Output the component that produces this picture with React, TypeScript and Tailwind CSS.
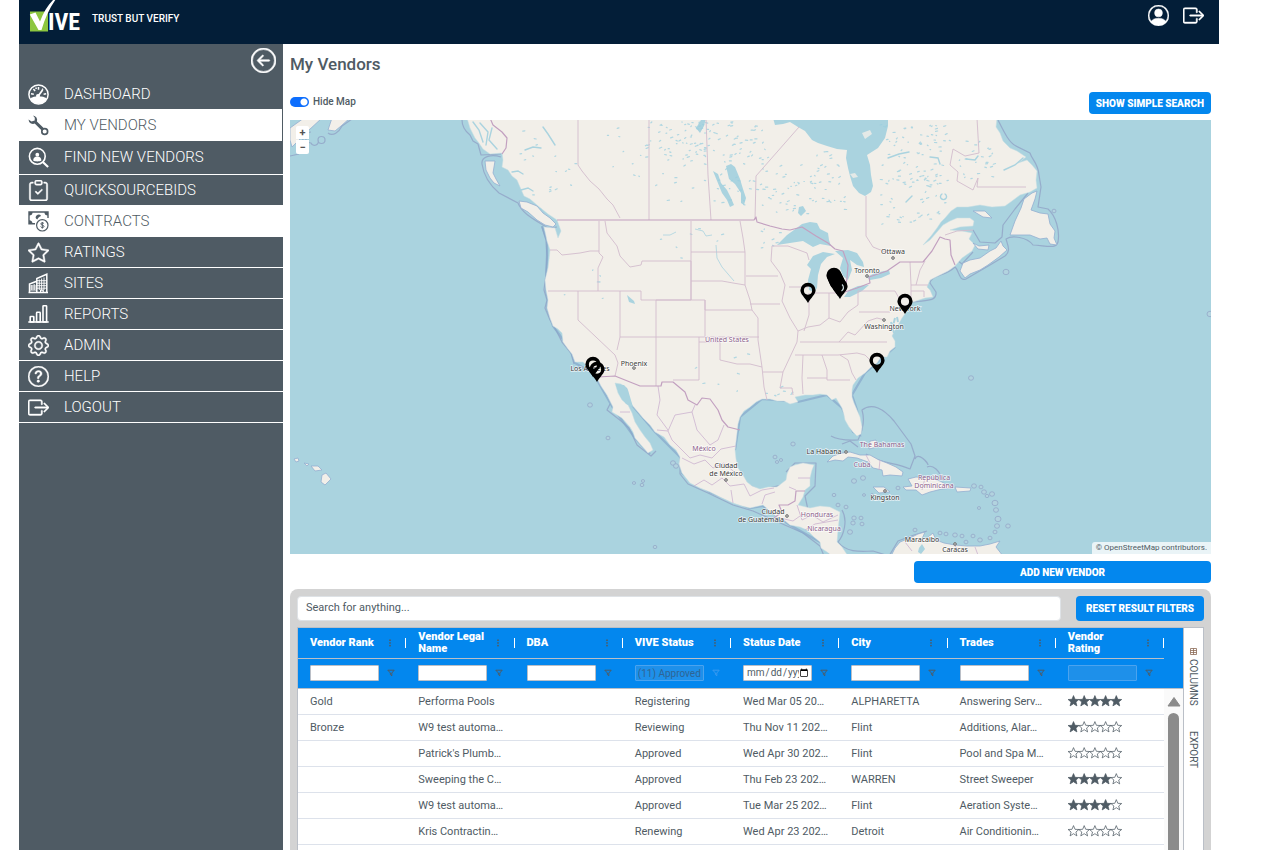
import React from "react";
import {
  BsArrowLeftCircle,
  BsBoxArrowRight,
  BsClipboardCheck,
  BsGear,
  BsPersonCircle,
  BsQuestionCircle,
  BsStar,
} from "react-icons/bs";

const LAND = "#f2efe9";
const WATER = "#aad3df";

/* ---------- sidebar icons ---------- */

function GaugeIcon() {
  return (
    <svg viewBox="0 0 21 21" className="size-[21px]" fill="none" stroke="currentColor" aria-hidden="true">
      <circle cx="10.5" cy="10.5" r="9.6" strokeWidth="1.5" />
      <path d="M2.2 14.2c2.4-1.4 4.800-1.800 8.300-1.800s5.900.4 8.300 1.800a9 9 0 0 1-16.600 0z" fill="currentColor" stroke="none" />
      <path d="M10 12.200 14.600 6" strokeWidth="1.800" />
      <circle cx="10" cy="12" r="2" fill="currentColor" stroke="none" />
      <path d="M10.500 3v2.800M5.400 5l1.700 2M3 9.800l2.800.4M15.600 10.200l2.600-.4M15 4.800l-.8.9M7.800 3.600l.5 1.400" strokeWidth="1.500" />
    </svg>
  );
}

function WrenchIcon() {
  return (
    <svg viewBox="0 0 21 21" className="size-[21px]" fill="none" stroke="currentColor" aria-hidden="true">
      <path d="M5 .4a4.600 4.600 0 0 1 3.900 6.100l7 6.800-2.200 2.200-7-6.900A4.600 4.600 0 0 1 .5 4.500l3 2.100L6.700 5.500 6.800 2.700z" fill="currentColor" stroke="none" />
      <circle cx="16.700" cy="16.500" r="2.900" strokeWidth="1.700" />
    </svg>
  );
}

function FindPersonIcon() {
  return (
    <svg viewBox="0 0 21 21" className="size-[21px]" fill="none" stroke="currentColor" aria-hidden="true">
      <circle cx="9.300" cy="9.300" r="7.900" strokeWidth="1.600" />
      <circle cx="9.300" cy="7.700" r="1.900" fill="currentColor" stroke="none" />
      <path d="M5.200 13.600c0-2.800 1.700-4 4.100-4s4.100 1.200 4.100 4c-2 1.200-6.200 1.200-8.200 0z" fill="currentColor" stroke="none" />
      <path d="m14.800 15 5.300 5" strokeWidth="2.200" />
    </svg>
  );
}

function ContractIcon() {
  return (
    <svg viewBox="0 0 21 21" className="size-[21px]" fill="none" stroke="currentColor" aria-hidden="true">
      <path d="M7 12.700H1V1h19v6" strokeWidth="1.400" />
      <path d="M1 1h3.600A3.600 3.600 0 0 1 1 4.600zM20 1h-3.600A3.600 3.600 0 0 0 20 4.600zM1 12.700V9.200a3.500 3.500 0 0 1 3.500 3.500z" fill="currentColor" stroke="none" />
      <path d="M7.600 6.800a3 3 0 0 1 5.500-1.900c-1.600.6-2.900 1.600-3.800 3.600a3 3 0 0 1-1.700-1.700z" fill="currentColor" stroke="none" />
      <circle cx="14.300" cy="14.300" r="5.700" strokeWidth="1.200" />
      <path d="M16 12.700c-.5-1.200-3.200-1.200-3.200.2s3.200 1 3.200 2.500-2.800 1.500-3.400.2M14.300 11v6.600" strokeWidth="1" />
    </svg>
  );
}

function BuildingsIcon() {
  return (
    <svg viewBox="0 0 21 21" className="size-[21px]" fill="none" stroke="currentColor" aria-hidden="true">
      <path d="M.5 19.600h19.500M1.500 19.500V11L8.800 8.200v11.300M8.800 8 8.800 5.500 18.800 1.200v18.300" strokeWidth="1.500" />
      <path d="M3.800 12v5M6.200 11v6M11.300 6.500V17M13.600 5.500V17M16 4.500V17M2 13h6.500M2 15h6.500M2 17h6.500M9 7.700h9.500M9 10.200h9.500M9 12.700h9.500M9 15.200h9.500" strokeWidth=".9" />
      <path d="M12.600 19.500v-2.400h2.600v2.400" strokeWidth="1.200" />
    </svg>
  );
}

function BarsIcon() {
  return (
    <svg viewBox="0 0 21 21" className="size-[21px]" fill="none" stroke="currentColor" strokeWidth="1.600" aria-hidden="true">
      <path d="M.3 18h20.400" />
      <rect x="2.200" y="12.500" width="3.600" height="5.500" rx=".6" />
      <rect x="8.600" y="8.300" width="3.600" height="9.700" rx=".6" />
      <rect x="15" y="1.700" width="3.600" height="16.300" rx=".6" />
    </svg>
  );
}

type NavItem = { label: string; icon: React.ReactNode; row: string };

const DARK_ROW = "h-[31px] border-b border-white text-white";
const NAV_ICON = "size-[21px] stroke-current stroke-[0.35px]";
const NAV: NavItem[] = [
  { label: "DASHBOARD", icon: <GaugeIcon />, row: "h-[30px] text-white" },
  { label: "MY VENDORS", icon: <WrenchIcon />, row: "h-8 border-r border-[#4f5b64] bg-white text-[#4f5b64]" },
  { label: "FIND NEW VENDORS", icon: <FindPersonIcon />, row: "h-[34px] border-b border-white text-white" },
  { label: "QUICKSOURCEBIDS", icon: <BsClipboardCheck className={NAV_ICON} />, row: "h-[30px] text-white" },
  { label: "CONTRACTS", icon: <ContractIcon />, row: "h-8 bg-white text-[#4f5b64]" },
  { label: "RATINGS", icon: <BsStar className={NAV_ICON} />, row: DARK_ROW },
  { label: "SITES", icon: <BuildingsIcon />, row: DARK_ROW },
  { label: "REPORTS", icon: <BarsIcon />, row: DARK_ROW },
  { label: "ADMIN", icon: <BsGear className={NAV_ICON} />, row: DARK_ROW },
  { label: "HELP", icon: <BsQuestionCircle className={NAV_ICON} />, row: DARK_ROW },
  { label: "LOGOUT", icon: <BsBoxArrowRight className={NAV_ICON} />, row: DARK_ROW },
];

/* ---------- map ---------- */

const MAINLAND =
  "M467 118 470 128 475 138 479 143 483 149 490 154 502 153 503 160 502 167 508 170 512 176 517 180 520 187 524 196 530 199 537 205 548 214 557 220 561 231 558 238 555 228 544 227 546 236 547 241 550 250 549 260 548 268 545 280 546 290 548 300 547 308 550 318 553 326 558 329 562 333 563 342 568 349 572 354 575 362 583 362 588 367 593 372 598 380 601 386 607 395 613 407 612 412 622 418 630 427 633 432 635 438 641 445 648 453 653 450 650 443 645 437 640 430 635 422 632 413 628 405 622 400 618 393 615 383 621 384 627 388 629 398 632 405 638 412 643 418 650 425 655 432 664 437 670 445 676 450 680 457 679 464 682 473 690 483 700 488 710 492 720 497 733 503 742 506 750 508 763 505 770 511 777 517 784 520 790 525 800 527 807 530 814 537 820 542 821 548 827 552 832 556 848 556 842 547 837 542 838 530 839 521 840 512 830 507 820 506 810 508 798 505 803 497 805 490 810 486 810 478 812 470 814 465 803 463 795 465 790 467 787 474 786 480 777 487 768 487 760 489 752 486 747 482 743 475 738 468 736 459 735 450 737 433 738 424 740 417 744 411 750 407 756 402 762 399 770 399 777 401 784 401 790 404 798 402 795 397 805 395 813 395 820 394 827 395 832 400 836 398 842 408 844 415 845 420 849 427 853 432 857 436 861 434 862 427 860 417 857 410 854 403 852 397 852 390 853 385 858 378 865 373 871 367 877 363 881 357 887 357 890 351 895 347 895 341 892 336 895 330 898 325 902 318 907 311 910 303 925 298 933 297 930 290 927 287 930 280 940 275 948 271 955 266 962 258 972 251 975 245 969 239 972 233 962 231 950 230 960 227 973 226 974 221 970 218 957 218 950 221 943 225 937 232 930 240 923 245 931 236 937 228 941 222 945 218 951 211 957 207 968 207 980 205 992 207 1005 206 1012 201 1020 195 1030 192 1037 188 1036 180 1037 171 1032 165 1027 160 1018 163 1026 157 1017 151 1010 148 1003 141 1000 133 996 127 997 118Z";

const ISLANDS =
  "M485 161 495 161 493 173 496 179 500 186 494 183 490 178 486 170ZM519 201 527 202 537 206 543 213 550 218 556 224 553 227 545 225 537 220 528 212 521 208ZM290 140V128L304 118H322L309 130 299 140 292 147ZM328 130 332 118H350L341 126 335 131ZM960 271 963 263 970 260 980 258 990 251 996 248 1001 241 1003 246 1007 250 999 257 988 265 980 270 970 274 965 278ZM973 243 979 246 989 245 988 250 978 249ZM1032 193 1037 191 1035 199 1031 210 1040 213 1048 214 1050 224 1055 231 1054 238 1057 245 1050 244 1047 238 1040 239 1030 235 1010 235 1015 221 1021 208 1024 199ZM973 211 985 211 992 218 983 217ZM827 462 833 456 842 453 850 452 860 455 870 455 879 460 887 463 896 467 903 472 902 476 890 475 883 476 882 470 873 468 868 462 857 458 848 457 843 461 835 460ZM903 487 912 486 908 479 916 477 930 478 940 481 953 488 942 489 930 492 922 495 916 490 906 490ZM955 487 971 488 970 491 957 492ZM873 487 884 487 890 492 879 493ZM891 556 895 548 900 542 910 538 918 534 925 532 922 539 927 538 933 533 936 540 944 543 955 545 967 546 980 546 990 544 1000 541 996 547 1003 556ZM322 475 326 473 331 479 325 485 321 482ZM311 466 318 466 322 470 315 471ZM304 463 309 464 307 466ZM294 459 298 458 299 461 296 462ZM869 449 870 441 876 440 877 447Z";

const GREY_SEA =
  "M290 156 299 154M300 143 303 141 302 130 307 121M311 132A3 3 0 1 0 311 143 3 3 0 0 0 318 140 3 3 0 1 0 325 140 3 3 0 0 0 318 140M328 133C333 137 339 132 342 126L352 119M462 120C462 127 465 131 470 135L473 141 478 144 481 155 501 154M501 157C492 154 481 156 482 164 484 178 492 187 499 193L518 203C522 213 533 219 543 225L548 228 557 227M542 227 546 240 547 256 546 274 544 290 547 300 545 308 550 320 557 332 562 342 571 353 574 364M998 120C1003 130 1009 143 1016 146L1030 153C1032 160 1038 163 1039 175L1041 187 1038 207 1048 209C1056 216 1060 231 1058 242 1056 249 1048 246 1033 245 1027 237 1012 235 1006 239 1008 246 1011 251 1005 256L990 265 966 279C959 282 959 270 955 267 946 276 931 275 930 283L936 292C937 302 926 300 913 302M1028 193 1015 209 1003 225 1002 237 995 243 980 242 973 230M973 252 962 264 957 260M831 436C839 441 850 440 858 440 863 430 865 420 862 410 872 402 884 409 894 421L911 444 915 456 910 469C895 462 880 464 866 454M915 459C918 451 928 463 928 465M927 467C933 464 940 471 942 480M842 444 850 441 858 447M610 404 607 410 621 421 629 428 637 445 651 456 656 451M680 460 680 474 688 484 708 493 733 505 753 511 778 522 803 533 820 546 824 556M842 510C848 520 844 535 838 542 846 552 858 552 873 551L889 556 898 541 914 535 927 531M786 484 760 490 747 484 740 471M808 510 805 496 815 486 816 463 795 463 786 472";

const US_BORDER =
  "M557 220H754L756 217 757 222 770 226 782 229 790 230 802 227 816 236 828 243 835 249 843 251 848 265 847 278 845 292 857 288 870 283 869 277 887 271 900 262H923L932 251 940 237 945 239 950 240 951 255 955 265M598 377 615 376 640 386H661L662 382H673L685 392 688 400 697 405 702 398 710 399 718 410 722 420 728 427 740 430M490 118 493 125 502 132 507 138 506 148 502 154M774 518 782 512 779 505 788 505 795 501 796 491H805";

const STATES =
  "M550 250 557 250 562 255 580 253 590 251H599M599 221V253L603 257 598 268V291M605 221 607 233 617 246 620 256 630 267 641 265 642 261H691V300H641V291M548 291H641M578 291V320L615 355 618 363 615 376M620 291V337L617 350M656 300V386M656 300H705V337M691 221V300M691 252H745M740 221 743 238 745 252V285L750 300 752 310M691 281H722L733 283 745 285M705 300V310H752L758 318V340L762 367 764 387 767 400M620 337H759M699 337V380H673M699 342H720V360L737 364 750 364 762 367M746 276H778M750 304H780M788 246 772 246 771 261 780 273 785 285 782 301 790 318 798 331 797 342 790 357 783 372H763M783 372 780 388H792L793 395M788 246 807 253 809 260M789 287H808M809 293V315L804 331M829 293V318M812 293H845M798 331 808 327 820 325 829 318 840 322 848 312 858 305V291H895L900 300M859 312H890M800 342H887M795 355H838M803 355 802 378 803 394M822 355 827 370V380H850M807 378H827M840 355 848 360 852 373 856 380M838 355 857 353 865 355 872 362M839 342 848 332 855 335 868 321 877 318 885 320M910 262 911 285H928M916 285 920 270 925 261M911 291H924V297M911 285V300M578 118V165L582 171 590 181 599 189 607 199 613 205 620 218M649 118V220M706 118 708 175 711 220M799 127 756 176 755 220M866 196V236L873 247 888 253M977 118 979 153 965 156 953 149 950 165 958 172 957 181 973 190 978 178 977 187H1026M945 235 957 231 973 230";

const MEX_STATES =
  "M620 412H630M658 386 660 400 657 415 668 430M657 430 668 431 675 415 692 412 695 405M692 412 697 430 710 445 718 440 724 425M668 431 672 440 682 450 690 458 700 455 712 458 721 449 736 446M682 458 694 464 705 460 713 468 724 463 732 470 740 476M694 486 704 480 712 485 722 478 730 486 744 484M744 484 750 496 762 490 774 488M733 503 731 490M762 504 765 495 775 492M789 487 796 490M798 478 810 478M797 505 802 520 812 515 823 522 838 515M805 530 815 524 838 520M780 518 793 521 800 516M866 455 870 463M880 460 879 470M925 478 922 490M905 542 912 551M955 546 960 553M975 547 978 555";

const LAKES =
  "M773 118 775 125 783 124 790 122 798 127 805 131 812 140 818 143 827 146 837 149 847 150 846 158 848 168 850 176 853 186 859 193 865 196 871 192 873 186 871 175 870 165 867 155 878 148 885 138 888 126 888 118ZM777 245 787 235 794 230 802 224 810 222 817 223 820 229 828 233 829 240 831 246 820 244 813 247 803 241 790 243ZM807 265 813 256 823 252 835 254 827 257 821 264 818 275 817 288 814 292 809 290 808 280 811 269ZM835 251 848 250 857 253 863 262 864 267 857 265 850 260 852 270 848 280 843 276 840 268 843 258ZM844 297 849 290 858 286 869 285 862 291 850 297ZM867 277 875 273 889 270 890 274 881 278 870 280ZM726 166 731 164 735 167 740 179 743 189 746 198 744 205 741 203 741 193 735 184 729 179ZM713 171 718 174 721 183 727 190 731 198 734 205 730 207 727 200 722 193ZM799 207 803 206 806 211 801 216 798 213ZM616 385 624 385 628 390 633 407 626 404 621 397ZM627 295 634 301 635 304 629 302ZM919 548 922 544 925 549 921 554 918 552ZM696 128 701 120 706 118 704 126 700 133Z";

const SMALL_ISLANDS: [number, number, number][] = [
  [590, 405, 2.4], [608, 438, 2], [673, 463, 2.5], [676, 466, 2.5], [634, 483, 1.6], [643, 481, 1.6], [642, 485, 1.8],
  [655, 547, 1.8], [775, 457, 2], [777, 462, 1.6], [781, 460, 1.600], [793, 444, 2.2], [834, 495, 1.800], [838, 505, 2], [846, 507, 2],
  [854, 481, 2.500], [863, 478, 2.500], [864, 495, 1.500], [872, 495, 1.500], [854, 518, 2.200], [861, 518, 2], [853, 523, 2.200], [862, 524, 2],
  [850, 532, 2.500], [898, 488, 2], [974, 486, 2.400], [981, 487, 2], [984, 492, 2.400], [992, 494, 2.500], [987, 496, 1.800], [995, 503, 3],
  [996, 510, 2.500], [998, 519, 3], [997, 526, 2.500], [995, 532, 2], [1008, 526, 2.300], [979, 508, 1.600], [971, 378, 2.500],
  [940, 533, 2], [946, 534, 2], [955, 535, 2.300], [962, 536, 2], [973, 536, 2], [966, 542, 2], [980, 540, 2.300], [990, 538, 2],
  [1006, 272, 3], [1054, 211, 2], [1210, 314, 3], [915, 530, 2],
];

const LABELS: { text: string; x: number; y: number; admin?: boolean }[] = [
  { text: "Ottawa", x: 893, y: 254 },
  { text: "Toronto", x: 867, y: 273 },
  { text: "New York", x: 905, y: 311 },
  { text: "Washington", x: 884, y: 329 },
  { text: "Los Angeles", x: 590, y: 371 },
  { text: "Phoenix", x: 634, y: 366 },
  { text: "United States", x: 727, y: 342, admin: true },
  { text: "México", x: 704, y: 451, admin: true },
  { text: "Ciudad", x: 726, y: 468 },
  { text: "de México", x: 726, y: 476 },
  { text: "Ciudad", x: 773, y: 514 },
  { text: "de Guatemala", x: 761, y: 522 },
  { text: "Honduras", x: 817, y: 517, admin: true },
  { text: "Nicaragua", x: 824, y: 531, admin: true },
  { text: "La Habana", x: 824, y: 454 },
  { text: "The Bahamas", x: 882, y: 447, admin: true },
  { text: "Cuba", x: 862, y: 467, admin: true },
  { text: "Kingston", x: 885, y: 500 },
  { text: "República", x: 934, y: 480, admin: true },
  { text: "Dominicana", x: 934, y: 488, admin: true },
  { text: "Maracaibo", x: 922, y: 542 },
  { text: "Caracas", x: 955, y: 552 },
];

const TOWN_DOTS = [[893, 258], [867, 276], [884, 320], [634, 368], [726, 480], [787, 516], [846, 452], [885, 491], [955, 544]];

const PINS = [
  [808, 302], [905, 313], [877, 372], [593, 376], [597, 381],
  [840, 298], [834, 287], [835, 289], [836, 291], [837, 293], [838, 295],
];

/* Small lakes spread over the northern regions: [x, y, width, height, count] */
const LAKE_FIELDS = [
  [520, 125, 55, 85, 18], [600, 122, 50, 60, 14], [650, 122, 60, 40, 60], [655, 160, 50, 45, 12],
  [708, 122, 60, 45, 45], [712, 165, 45, 40, 20], [760, 165, 85, 50, 60], [800, 150, 45, 30, 10],
  [880, 125, 70, 60, 70], [875, 170, 70, 55, 45], [955, 130, 40, 50, 24], [760, 228, 20, 20, 8],
  [610, 225, 120, 35, 7], [560, 270, 50, 40, 6], [690, 350, 60, 50, 7], [765, 385, 30, 12, 10],
];

function scatter() {
  let seed = 71;
  const next = () => {
    seed = (seed * 16807) % 2147483647;
    return seed / 2147483647;
  };
  let d = "";
  for (const [x, y, w, h, n] of LAKE_FIELDS) {
    for (let i = 0; i < n; i++) {
      const px = x + next() * w;
      const py = y + next() * h;
      const len = 0.3 + next() * 2;
      d += `M${px.toFixed(1)} ${py.toFixed(1)}l${len.toFixed(1)} ${((next() - 0.6) * 1.6).toFixed(1)}`;
    }
  }
  return d;
}

const TINY_LAKES = scatter();

function VendorMap() {
  return (
    <svg
      viewBox="290 120 921 434"
      preserveAspectRatio="xMidYMid slice"
      className="block h-[434px] w-full"
      role="img"
      aria-label="Map of vendor locations"
    >
      <rect x="0" y="0" width="1600" height="900" fill={WATER} />
      <path d={GREY_SEA} fill="none" stroke="#8f9fc4" strokeWidth="1.200" strokeLinejoin="round" opacity=".75" />
      <path d="M542 226 547 241 547 256 546 280 546 290 548 300 547 308 553 326 562 338 572 354 575 363 593 373 613 408 635 438 650 454M627 388 632 405 655 432 680 457 682 473 710 492 750 508 763 506 790 525 820 542 832 556M735 450 740 417 762 399 798 402 827 395 842 408 853 432 860 435 857 410 852 395 865 373 895 347" fill="none" stroke="#86a6cb" strokeWidth="2.200" opacity=".7" />
      <path d={MAINLAND} fill={LAND} stroke="#c8dfe2" strokeWidth=".5" strokeLinejoin="round" />
      <path d={ISLANDS} fill={LAND} stroke="#93aed0" strokeWidth=".8" strokeLinejoin="round" />
      <path d={LAKES} fill={WATER} />
      <path d="M850 174 855 173 858 177 853 178ZM862 133 870 130 872 134 865 139Z" fill={LAND} opacity=".8" />
      <path d={TINY_LAKES} fill="none" stroke="#9bcfdf" strokeWidth="1.200" strokeLinecap="round" opacity=".75" />
      <path
        d="M543 127 548 134 555 145M473 122 479 130 483 142M480 123 488 132 486 145M492 128 489 140 497 149M525 150 533 147 541 148M512 172 518 171 523 174M521 190 528 188 533 191M942 194A3 3 0 1 0 945 194M966 159 975 160 978 156M1004 170 1015 165 1023 158M906 202 912 196M888 158 899 154 909 152M930 157 938 158 940 164"
        fill="none"
        stroke={WATER}
        strokeWidth="1.400"
        strokeLinecap="round"
      />
      <path d="M695 229 703 231 706 236 712 235M716 245 717 258 722 267 734 281M663 235 670 235 676 232" fill="none" stroke={WATER} strokeWidth=".8" />
      <path d="M891 322 894 333M895 318 893 326M897 317 898 322" stroke={WATER} strokeWidth="2" />
      <path d={STATES} fill="none" stroke="#d2bccd" strokeWidth=".9" strokeLinejoin="round" />
      <path d={MEX_STATES} fill="none" stroke="#cbb3cf" strokeWidth=".8" strokeLinejoin="round" />
      <path d={US_BORDER} fill="none" stroke="#c2a0c0" strokeWidth="1.200" strokeLinejoin="round" />
      <g fill="#b5d3df" stroke="#8f9fc4" strokeWidth=".8" opacity=".8">
        {SMALL_ISLANDS.map(([x, y, r], i) => (
          <ellipse key={i} cx={x} cy={y} rx={r} ry={r * 0.9} />
        ))}
      </g>
      {TOWN_DOTS.map(([x, y], i) => (
        <circle key={i} cx={x} cy={y} r="1.400" fill="#bbb" stroke="#666" strokeWidth=".8" />
      ))}
      <g fontFamily="'Noto Sans', sans-serif" fontSize="7" textAnchor="middle">
        {LABELS.map((l, i) => (
          <text
            key={i}
            x={l.x}
            y={l.y}
            fill={l.admin ? "#8d618b" : "#3a3a3a"}
            stroke="#ffffff"
            strokeOpacity=".7"
            strokeWidth="1.500"
            paintOrder="stroke"
          >
            {l.text}
          </text>
        ))}
      </g>
      {PINS.map(([x, y], i) => (
        <g key={i} transform={`translate(${x} ${y})`}>
          <path
            d="M0 1C-3-4.500-7.600-7.500-7.600-11.700A7.600 7.600 0 0 1 7.600-11.700C7.600-7.500 3-4.500 0 1ZM0-15.500A4.100 4.100 0 1 0 0-7.300 4.100 4.100 0 0 0 0-15.500Z"
            fillRule="evenodd"
            fill="#000"
          />
        </g>
      ))}
      <ellipse cx="835" cy="280" rx="6.500" ry="10" transform="rotate(-18 835 280)" fill="#000" />
      <path d="M842 284.500A4 4 0 0 1 841.500 291" fill="none" stroke="#cfe0e2" strokeWidth="1.200" />
    </svg>
  );
}

/* ---------- vendor grid ---------- */

function Funnel({ faded = false }: { faded?: boolean }) {
  return (
    <svg viewBox="0 0 8 8" className={faded ? "size-2 text-[#3b9af0]" : "size-2 text-[#4f5b64]"} fill="none" stroke="currentColor" aria-hidden="true">
      <path d="M.8 1.200h6.400L4.800 4v2.800L3.400 5.600V4z" />
    </svg>
  );
}

function Dots() {
  return (
    <svg viewBox="0 0 4 8" className="h-2 w-1" fill="#4f5b64" aria-hidden="true">
      <rect x="1.200" y="0.500" width="1.600" height="1.500" />
      <rect x="1.200" y="3.200" width="1.600" height="1.500" />
      <rect x="1.200" y="5.900" width="1.600" height="1.500" />
    </svg>
  );
}

function Stars({ count }: { count: number }) {
  return (
    <svg viewBox="0 0 54 12" className="h-3 w-[54px]" role="img" aria-label={`${count} of 5 stars`}>
      {[0, 1, 2, 3, 4].map((i) => (
        <path
          key={i}
          transform={`translate(${i * 10.7} 0)`}
          d="M5.500.6 7 4.300 10.900 4.500 7.900 7 8.900 10.900 5.500 8.700 2.100 10.900 3.100 7 .1 4.500 4 4.300Z"
          fill={i < count ? "#4f5b64" : "none"}
          stroke="#4f5b64"
          strokeWidth=".75"
        />
      ))}
    </svg>
  );
}

const COLUMNS = ["Vendor Rank", "Vendor Legal Name", "DBA", "VIVE Status", "Status Date", "City", "Trades", "Vendor Rating"];

const ROWS: { cells: string[]; stars: number }[] = [
  { cells: ["Gold", "Performa Pools", "", "Registering", "Wed Mar 05 20…", "ALPHARETTA", "Answering Serv…"], stars: 5 },
  { cells: ["Bronze", "W9 test automa…", "", "Reviewing", "Thu Nov 11 202…", "Flint", "Additions, Alar…"], stars: 1 },
  { cells: ["", "Patrick's Plumb…", "", "Approved", "Wed Apr 30 202…", "Flint", "Pool and Spa M…"], stars: 0 },
  { cells: ["", "Sweeping the C…", "", "Approved", "Thu Feb 23 202…", "WARREN", "Street Sweeper"], stars: 4 },
  { cells: ["", "W9 test automa…", "", "Approved", "Tue Mar 25 202…", "Flint", "Aeration Syste…"], stars: 4 },
  { cells: ["", "Kris Contractin…", "", "Renewing", "Wed Apr 23 202…", "Detroit", "Air Conditionin…"], stars: 0 },
];

function FilterField({ name }: { name: string }) {
  const base = "h-4 w-[69px] min-w-0 rounded-[1px] border border-[#babfc7] leading-none";
  if (name === "Status Date") {
    return (
      <input
        type="date"
        aria-label={`${name} filter`}
        className={`${base} overflow-hidden bg-white pl-[2px] pr-0 text-[10px] text-[#4f5b64] [&::-webkit-calendar-picker-indicator]:m-0 [&::-webkit-calendar-picker-indicator]:size-[10px] [&::-webkit-calendar-picker-indicator]:p-0 [&::-webkit-calendar-picker-indicator]:mr-[2px] [&::-webkit-datetime-edit]:overflow-hidden [&::-webkit-datetime-edit]:p-0`}
      />
    );
  }
  if (name === "VIVE Status" || name === "Vendor Rating") {
    return (
      <input
        type="text"
        disabled
        aria-label={`${name} filter`}
        defaultValue={name === "VIVE Status" ? "(11) Approved" : ""}
        className="h-4 w-[69px] min-w-0 rounded-[1px] border border-[#4ba3ee] bg-[#1e90ea] px-[2px] text-[10px] leading-none text-[#2f6493]"
      />
    );
  }
  return <input type="text" aria-label={`${name} filter`} className={`${base} bg-white px-1 text-[11px]`} />;
}

function VendorGrid() {
  return (
    <div className="flex min-w-0 flex-1">
      <table className="w-full min-w-0 flex-1 table-fixed border-collapse self-start text-left text-[11px] text-[#4f5b64]">
        <thead className="bg-[#0387ee]">
          <tr className="h-[30px] border-b border-[#babfc7]">
            {COLUMNS.map((c) => (
              <th key={c} scope="col" className="p-0 pl-3 align-middle font-black text-white">
                <div className="flex items-center">
                  <span className="w-[78px] pr-2 leading-3">{c}</span>
                  <Dots />
                  <span className="ml-auto h-[10px] w-px bg-white" />
                </div>
              </th>
            ))}
          </tr>
          <tr className="h-[30px] border-b border-[#babfc7]">
            {COLUMNS.map((c) => (
              <td key={c} className="p-0 pl-3 align-middle">
                <div className="flex items-center gap-2">
                  <FilterField name={c} />
                  <Funnel faded={c === "VIVE Status"} />
                </div>
              </td>
            ))}
          </tr>
        </thead>
        <tbody>
          {ROWS.map((r, i) => (
            <tr key={i} className="h-[26px] border-b border-[#dde2eb]">
              {r.cells.map((c, j) => (
                <td key={j} className="whitespace-nowrap p-0 pl-3 pt-[2px] align-middle">
                  {c}
                </td>
              ))}
              <td className="p-0 pl-3 align-middle">
                <Stars count={r.stars} />
              </td>
            </tr>
          ))}
          <tr className="h-[26px]">
            <td colSpan={8} />
          </tr>
        </tbody>
      </table>
      <div className="flex w-[19px] flex-col bg-[#fafafa]">
        <div className="h-[61px] shrink-0 border-b border-[#babfc7] bg-[#0387ee]" />
        <svg viewBox="0 0 14 10" className="mx-auto mt-2 h-[10px] w-[14px] shrink-0" fill="#8b8b8b" aria-hidden="true">
          <path d="M7 .5 13 9H1z" stroke="#8b8b8b" strokeLinejoin="round" />
        </svg>
        <div className="mx-auto mt-[6px] w-[11px] flex-1 rounded-t-full bg-[#8b8b8b]" />
      </div>
    </div>
  );
}

/* ---------- page ---------- */

const BLUE_BUTTON = "rounded-[4px] bg-[#0387ee] text-center font-black text-white";

export default function App() {
  return (
    <div className="flex h-screen flex-col overflow-hidden bg-white pl-[19px] pr-[57px] font-['Roboto',sans-serif] text-[#4f5b64]">
      <header className="flex h-11 shrink-0 items-start bg-[#031e38] pl-[10px] pr-[15px] text-white">
        <a href="#home" aria-label="VIVE home" className="block">
          <svg viewBox="0 0 54 34" className="h-[34px] w-[54px]">
            <rect x="1" y="11.500" width="18" height="20" fill="#8cc63f" />
            <path d="M.8 14.500 6.500 12.500 11 21.500C14.500 12 19 5 25-1H27C20.500 8 16 18 12.500 30H9.500Z" fill="#fff" />
            <text
              x="19"
              y="30"
              fill="#fff"
              fontSize="24"
              fontWeight="700"
              fontFamily="'Roboto Condensed', 'Open Sans Condensed', 'Liberation Sans Narrow', 'Roboto', sans-serif"
            >
              IVE
            </text>
          </svg>
        </a>
        <span className="ml-[9px] mt-3 text-[10px] font-medium leading-[14px]">TRUST BUT VERIFY</span>
        <nav className="ml-auto mt-[5px] flex gap-[14px]">
          <a href="#profile" aria-label="Profile">
            <BsPersonCircle className="size-[21px] stroke-current stroke-[0.35px]" />
          </a>
          <a href="#logout" aria-label="Log out">
            <BsBoxArrowRight className="size-[21px] stroke-current stroke-[0.35px]" />
          </a>
        </nav>
      </header>

      <div className="flex min-h-0 flex-1">
        <aside className="w-[264px] shrink-0 bg-[#4f5b64]">
          <div className="flex h-[35px] justify-end pr-[7px] pt-1">
            <button type="button" aria-label="Collapse menu" className="size-[25px] text-white">
              <BsArrowLeftCircle className="size-[25px] stroke-current stroke-[0.35px]" />
            </button>
          </div>
          <nav className="flex flex-col">
            {NAV.map((item) => (
              <a
                key={item.label}
                href="#"
                className={`${item.row} flex shrink-0 items-center gap-[15px] pl-[9px] text-[15px] font-light`}
              >
                {item.icon}
                <span>{item.label}</span>
              </a>
            ))}
          </nav>
        </aside>

        <main className="flex min-w-0 flex-1 flex-col pl-[7px] pr-2">
          <h1 className="mt-2 text-[17px] font-medium leading-6">My Vendors</h1>
          <div className="mt-4 flex h-[22px] shrink-0 items-center justify-between">
            <label className="flex items-center gap-1 pb-[3px] text-[10px] font-medium">
              <input
                type="checkbox"
                role="switch"
                defaultChecked
                className="h-[10px] w-[19px] appearance-none rounded-full bg-[#0d6efd] bg-[radial-gradient(circle_at_14px_5px,white_3px,transparent_4px)]"
              />
              Hide Map
            </label>
            <button type="button" className={`${BLUE_BUTTON} h-[22px] px-[7px] text-[10px]`}>
              SHOW SIMPLE SEARCH
            </button>
          </div>

          <section className="relative mt-[6px] shrink-0">
            <VendorMap />
            <div className="absolute left-[6px] top-[6px] flex flex-col gap-px text-[11px] font-bold leading-none text-[#555]">
              <button type="button" aria-label="Zoom in" className="h-[13px] w-[13px] rounded-t-[2px] bg-white leading-none">
                +
              </button>
              <button type="button" aria-label="Zoom out" className="h-[14px] w-[13px] rounded-b-[2px] bg-white leading-none">
                −
              </button>
            </div>
            <div className="absolute bottom-0 right-0 rounded-tl-[3px] bg-white/75 px-1 text-[8px] leading-3">
              © <a href="#osm">OpenStreetMap</a> contributors.
            </div>
          </section>

          <button type="button" className={`${BLUE_BUTTON} mt-[7px] h-[22px] w-[297px] shrink-0 self-end text-[10px]`}>
            ADD NEW VENDOR
          </button>

          <section className="mt-[6px] flex min-h-0 flex-1 flex-col overflow-hidden rounded-t-lg bg-[#d3d3d3] px-[7px] pt-[7px]">
            <div className="flex shrink-0 gap-[15px]">
              <input
                type="text"
                aria-label="Search vendors"
                placeholder="Search for anything..."
                className="h-[25px] min-w-0 flex-1 rounded-[4px] border border-[#dee2e6] bg-white px-2 pb-[2px] text-[11px] placeholder:text-[#4f5b64]"
              />
              <button type="button" className={`${BLUE_BUTTON} h-[25px] w-32 text-[10px]`}>
                RESET RESULT FILTERS
              </button>
            </div>
            <div className="mt-[6px] flex shrink-0 border border-b-0 border-[#babfc7] bg-white">
              <VendorGrid />
              <div className="flex w-5 flex-col items-center border-l border-[#babfc7] pt-5 text-[10px]">
                <button type="button" className="flex items-center gap-1 [writing-mode:vertical-rl]">
                  <svg viewBox="0 0 7 7" className="size-[7px]" fill="none" stroke="#8b6a55" aria-hidden="true">
                    <path d="M.5.5h6v6h-6zM.5 2.500h6M.5 4.500h6M3.500.5v6" strokeWidth=".8" />
                  </svg>
                  COLUMNS
                </button>
                <button type="button" className="mt-[25px] [writing-mode:vertical-rl]">
                  EXPORT
                </button>
              </div>
            </div>
          </section>
        </main>
      </div>
    </div>
  );
}
